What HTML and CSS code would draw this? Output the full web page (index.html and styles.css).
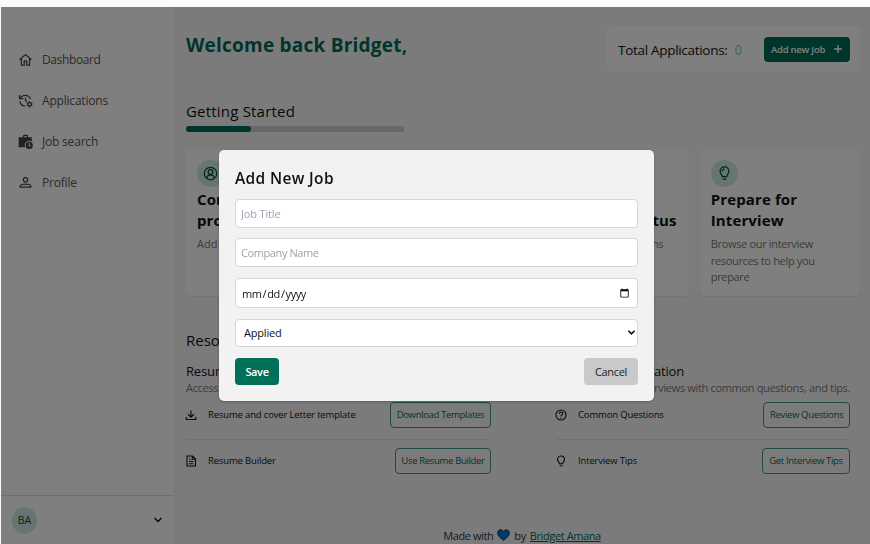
FILE: index.html
```html
<!DOCTYPE html>
<html lang="en">
<head>
<meta charset="utf-8">
<title>Dashboard</title>
<link rel="stylesheet" href="styles.css">
</head>
<body>
<div class="app">
  <aside class="sidebar">
    <nav class="nav">
      <a class="nav-item"><svg class="ic" viewBox="0 0 24 24"><path d="M2.500 12.500 12 4l9.500 8.500M5.500 10.500V21H10v-6.500h4V21h4.500V10.500"/></svg><span class="n1">Dashboard</span></a>
      <a class="nav-item"><svg class="ic" viewBox="0 0 24 24"><path d="M2.500 3v6h6M3.500 9A9 9 0 0 1 20 9.500M3 13a9 9 0 0 0 8 8M12 7v5l2 2"/><circle cx="18.500" cy="18" r="2.800"/><path d="M18.500 13v2M18.500 21v2M14 15.500l2 1M21 19.500l2 1M14 20.500l2-1M21 16.500l2-1"/></svg><span class="n2">Applications</span></a>
      <a class="nav-item"><svg class="ic solid" viewBox="0 0 24 24"><path fill-rule="evenodd" d="M8 5V2.500L9.500 1h5L16 2.500V5h6v7.500A7 7 0 0 0 11.500 21H1V5zm2 0h4V3h-4z"/><path fill-rule="evenodd" d="M18 12.500a5.700 5.700 0 1 1 0 11.400 5.700 5.700 0 0 1 0-11.400zm-.8 2v4.200l2.800 2 1-1.200-2.200-1.600v-3.400z"/></svg><span class="n2">Job search</span></a>
      <a class="nav-item"><svg class="ic" viewBox="0 0 24 24"><circle cx="12" cy="7.500" r="3.500"/><path d="M3.500 19.500v-1.500c0-4.500 17-4.500 17 0v1.500z"/></svg><span class="n2">Profile</span></a>
    </nav>
    <div class="account"><span class="avatar">BA</span><svg class="chev" viewBox="0 0 10 10"><path d="M1.500 3 5 6.500 8.500 3"/></svg></div>
  </aside>
  <main class="main">
    <header class="top">
      <h1>Welcome back Bridget,</h1>
      <div class="totals"><span class="total-label">Total Applications:</span><span class="count">0</span><button class="add"><span>Add new Job</span><svg viewBox="0 0 10 10"><path d="M5 1v8M1 5h8"/></svg></button></div>
    </header>
    <h2 class="started">Getting Started</h2>
    <div class="progress"><div class="bar"></div></div>
    <section class="cards">
      <article class="card"><span class="badge"><svg viewBox="0 0 24 24"><circle cx="12" cy="12" r="10"/><circle cx="12" cy="9.500" r="3.700"/><path d="M6.500 20v-2c0-4.500 11-4.500 11 0v2"/></svg></span><h3>Complete your profile</h3><p>Add your details</p></article>
      <article class="card"><span class="badge"></span><h3>Add a new job</h3><p>Add jobs you applied to</p></article>
      <article class="card"><span class="badge"></span><h3>Track<br>application status</h3><p class="snug">Monitor your applications</p></article>
      <article class="card"><span class="badge"><svg viewBox="0 0 24 24"><path d="M8.500 17c0-3-3.500-4-3.500-8.500a7 7 0 0 1 14 0c0 4.500-3.500 5.500-3.500 8.500zM9 21h6M8.500 8.500A3.500 3.500 0 0 1 12 5"/></svg></span><h3>Prepare for Interview</h3><p class="snug">Browse our interview<br>resources to help you<br>prepare</p></article>
    </section>
    <h2 class="resources">Resources</h2>
    <section class="columns">
      <div>
        <h4>Resume Templates</h4><p class="sub">Access resume templates</p>
        <div class="row"><svg viewBox="0 0 24 24"><path d="M12 3v13M6 10.500l6 6 6-6M2.500 16v5h19v-5"/></svg><span>Resume and cover Letter template</span><button class="b1">Download Templates</button></div>
        <div class="row"><svg viewBox="0 0 24 24"><path d="M4 2h11l6 6v14H4zM14.500 2v6.500H21M8 13h9M8 17.500h9M8 8.500h3"/></svg><span>Resume Builder</span><button class="b2">Use Resume Builder</button></div>
      </div>
      <div>
        <h4>Interview Preparation</h4><p class="sub right-sub">Prepare for your interviews with common questions, and tips.</p>
        <div class="row"><svg viewBox="0 0 24 24"><circle cx="12" cy="12" r="10"/><path d="M8.500 9.500c0-5 7-4.500 7-.5 0 3-3.500 2.500-3.500 5.500M12 16.500v2.500"/></svg><span>Common Questions</span><button class="b3">Review Questions</button></div>
        <div class="row"><svg viewBox="0 0 24 24"><path d="M9 17.500c0-3-4-4-4-8.500a7 7 0 0 1 14 0c0 4.500-4 5.500-4 8.500zM9 21.500h6"/></svg><span>Interview Tips</span><button class="b4">Get Interview Tips</button></div>
      </div>
    </section>
    <footer><span>Made with</span><svg viewBox="0 0 14 13"><path d="M7 12.300C3.500 9.700.7 7.400.7 4.200.7.500 5.300-.2 7 2.700 8.700-.2 13.300.5 13.300 4.200c0 3.200-2.800 5.500-6.300 8.100z"/></svg><span>by</span><a>Bridget Amana</a></footer>
  </main>
</div>
<div class="overlay">
  <form class="modal">
    <h2>Add New Job</h2>
    <input type="text" placeholder="Job Title">
    <input class="company" type="text" placeholder="Company Name">
    <input class="date" type="date">
    <div class="select"><select><option>Applied</option></select><svg viewBox="0 0 10 10"><path d="M1.500 3 5 6.500 8.500 3"/></svg></div>
    <div class="actions"><button type="button" class="save">Save</button><button type="button" class="cancel">Cancel</button></div>
  </form>
</div>
</body>
</html>
```
FILE: styles.css
```css
* { box-sizing: border-box; }
body { margin: 0; height: 544px; overflow: hidden; background: #fcfcfc; padding: 7px 0 0 1px; font-family: "Open Sans", "Noto Sans", sans-serif; color: #111; }
h1, h2, h3, h4, p { margin: 0; font-weight: 400; }
button, input, select { font-family: inherit; }
svg { fill: none; stroke: currentColor; stroke-width: 2; flex: none; }
.app { display: flex; height: 537px; background: #f7f7f7; }
.sidebar { width: 174px; background: #fff; border-right: 1px solid #ececec; display: flex; flex-direction: column; justify-content: space-between; }
.nav { padding: 32px 0 0 17px; }
.nav-item { display: flex; align-items: center; gap: 9px; height: 41px; font-size: 12px; color: #555; }
.n1 { letter-spacing: -.38px; }
.n2 { letter-spacing: -.2px; }
.ic { width: 15px; height: 15px; color: #444; }
.solid { fill: currentColor; stroke: none; }
.account { height: 49px; border-top: 1px solid #dcdcdc; display: flex; align-items: center; justify-content: space-between; padding: 0 11px; }
.avatar { width: 25px; height: 27px; border-radius: 50%; background: #cdebe2; font-size: 10.5px; display: grid; place-items: center; color: #333; }
.chev { width: 10px; height: 10px; stroke-width: 1.5; }
.main { flex: 1; padding: 19px 10px 0 11px; min-width: 0; }
.top { display: flex; justify-content: space-between; height: 46px; }
h1 { font-size: 19px; line-height: 26px; font-weight: 700; color: #006b56; margin-top: 6px; letter-spacing: .23px; }
.totals { width: 253px; background: #fff; border-radius: 5px; padding: 0 10px 0 11px; display: flex; align-items: center; }
.total-label { font-size: 13.5px; letter-spacing: -.3px; padding-top: 1px; }
.count { font-size: 13.5px; font-weight: 600; color: #a9d6c9; margin-left: 7px; padding-top: 1px; }
.add { margin-left: auto; width: 86px; height: 25px; border: 0; border-radius: 4px; background: #006b56; color: #fff; display: flex; align-items: center; justify-content: space-between; padding: 0 7px; font-size: 9.5px; font-weight: 600; white-space: nowrap; letter-spacing: -.25px; }
.add svg { width: 10px; height: 10px; stroke-width: 1.4; }
.started { font-size: 15px; line-height: 20px; margin-top: 29px; letter-spacing: .2px; }
.progress { width: 218px; height: 6px; margin-top: 5px; border-radius: 3px; background: #cdd3d1; }
.bar { width: 30%; height: 6px; border-radius: 3px; background: #006b56; }
.cards { display: grid; grid-template-columns: repeat(4, minmax(0, 1fr)); gap: 11px; margin-top: 17px; }
.card { height: 147px; background: #fff; border-radius: 5px; padding: 11px; box-shadow: 0 1px 2px rgba(0,0,0,.08); }
.badge { width: 27px; height: 27px; border-radius: 50%; background: #cdebe2; display: grid; place-items: center; color: #004d3d; }
.badge svg { width: 15px; height: 15px; }
h3 { font-size: 15px; line-height: 21px; font-weight: 700; margin-top: 2px; letter-spacing: .12px; white-space: normal; }
.card p { font-size: 11px; line-height: 16.5px; color: #777; margin-top: 5px; white-space: nowrap; }
.card p.snug { letter-spacing: -.33px; }
.resources { font-size: 15px; line-height: 20px; margin-top: 34px; }
.columns { display: grid; grid-template-columns: 305px 294px; gap: 65px; margin-top: 12px; }
.columns > div { min-width: 0; }
h4 { font-size: 13px; line-height: 18px; white-space: nowrap; letter-spacing: -.15px; }
.sub { font-size: 11px; line-height: 16px; color: #777; white-space: nowrap; letter-spacing: -.33px; }
.right-sub { display: flex; justify-content: flex-end; }
.row { display: flex; align-items: center; height: 41px; font-size: 9.5px; font-weight: 500; letter-spacing: -.16px; }
.row:nth-of-type(1) { height: 44px; border-bottom: 1px solid #e2e2e2; padding-bottom: 6px; }
.row svg { width: 12px; height: 12px; margin: 0 11px 0 -1px; stroke-width: 2.2; }
.row button { margin-left: auto; height: 26px; border: 1px solid #3d9680; border-radius: 4px; background: transparent; color: #006b56; font-size: 9.5px; padding: 0; white-space: nowrap; letter-spacing: -.33px; }
.row .b1 { width: 101px; }
.row .b2 { width: 96px; }
.row .b3 { width: 87px; }
.row .b4 { width: 88px; }
footer { display: flex; justify-content: center; align-items: center; gap: 4px; height: 18px; margin-top: 45px; padding-right: 2px; font-size: 11px; color: #333; letter-spacing: -.4px; }
footer svg { width: 13px; height: 12px; fill: #0074d4; stroke: #103450; stroke-width: 1; }
footer a { color: #006b56; text-decoration: underline; }
.overlay { position: fixed; inset: 7px 0 0 1px; background: rgba(0,0,0,.5); display: flex; justify-content: center; align-items: flex-start; padding: 143px 0 0 2px; }
.modal { width: 435px; height: 251px; background: #f2f2f2; border-radius: 5px; padding: 16px; display: flex; flex-direction: column; box-shadow: 0 1px 3px rgba(0,0,0,.25); }
.modal h2 { font-size: 15.5px; line-height: 24px; font-weight: 600; margin-bottom: 9px; letter-spacing: .35px; }
.modal input, .modal select { width: 403px; height: 29px; border: 1px solid #d5d7d9; border-radius: 4px; background: #fff; font-size: 11px; padding: 0 5px; margin: 0 0 10px; color: #111; letter-spacing: -.15px; }
.modal input::placeholder { color: #9ca3af; opacity: 1; }
.modal input.company { letter-spacing: -.4px; }
.modal input.date { height: 30px; margin: 1px 0 11px; padding-right: 5px; letter-spacing: -.4px; }
.select { position: relative; height: 28px; margin-bottom: 11px; }
.modal select { appearance: none; padding: 0 8px 2px; height: 28px; margin: 0; display: block; letter-spacing: -.2px; }
.select svg { position: absolute; right: 2px; top: 9px; width: 9px; height: 9px; stroke-width: 1.8; }
.actions { display: flex; justify-content: space-between; width: 403px; }
.actions button { height: 27px; border: 0; border-radius: 4px; font-size: 11px; padding: 0; letter-spacing: -.35px; }
.actions .save { width: 44px; background: #00705a; color: #fff; font-weight: 600; }
.actions .cancel { width: 54px; background: #c8caca; color: #222; }
```
